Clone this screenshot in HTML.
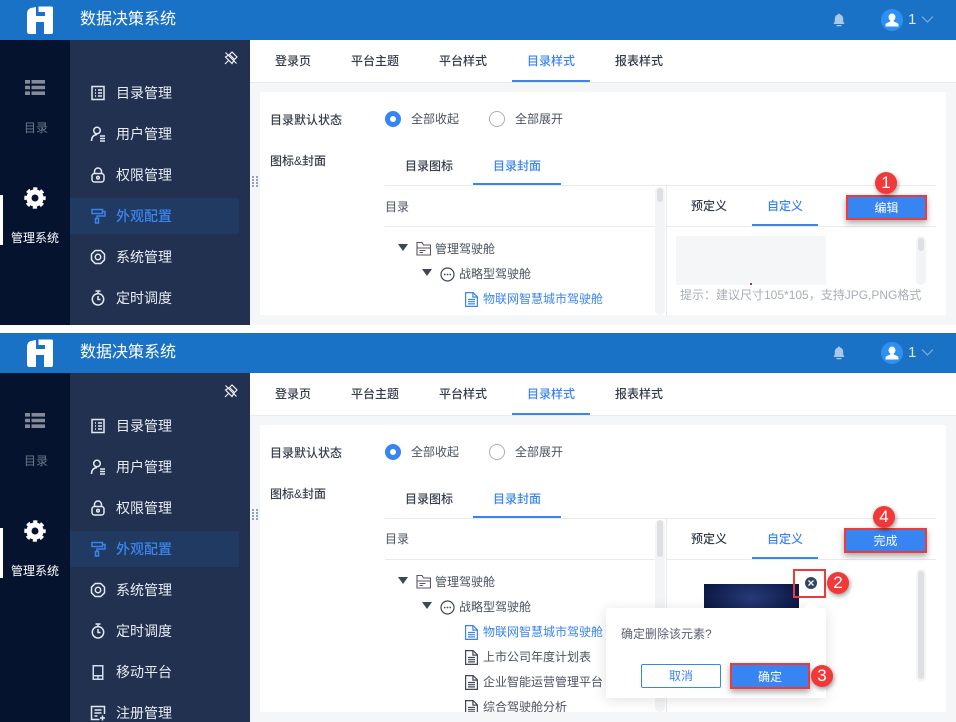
<!DOCTYPE html>
<html lang="zh-CN">
<head>
<meta charset="utf-8">
<title>数据决策系统</title>
<style>
html,body{margin:0;padding:0;background:#fff}
body{width:956px;height:722px;position:relative;overflow:hidden;font-family:"Liberation Sans","Noto Sans CJK SC",sans-serif;font-size:12px;color:#3b4354}
.p{position:absolute;left:0;width:956px;overflow:hidden;background:#f5f6f8}
.a{position:absolute;display:block}
.t{position:absolute;white-space:nowrap;line-height:20px;height:20px}
.hd{left:0;top:0;width:956px;height:40px;background:#1a72c6}
.rail{left:0;top:40px;width:70px;background:#06132e}
.menu{left:70px;top:40px;width:180px;background:#223150}
.m{color:#e8edf5;font-size:14px;left:116px}
.ic{position:absolute;fill:none;stroke:#e3e9f2;stroke-width:1.5}
.tab{font-weight:500;color:#353c4a}
.blue{color:#3a84ee}
.line{position:absolute;background:#e8eaed}
.ul{position:absolute;background:#3685f2}
.track{position:absolute;background:#f3f4f5;border-radius:5px}
.thumb{position:absolute;background:#dddfe3;border-radius:3px}
.btn{position:absolute;box-sizing:border-box;background:#3685f2;border:2px solid #f03a3a;color:#fff;text-align:center;line-height:23px;box-shadow:0 3px 6px rgba(0,0,0,.35)}
.bd{position:absolute;width:22px;height:22px;border-radius:50%;background:#f03a3a;color:#fff;font-size:17px;line-height:22px;text-align:center;box-shadow:1px 2px 5px rgba(0,0,0,.4)}
.tree{color:#4a5160}
</style>
</head>
<body>
<svg width="0" height="0" style="position:absolute">
<defs>
<symbol id="logo" viewBox="0 0 28 28"><path fill="#fff" d="M1 8Q1 3 5 2L10 1V28H3.500Q1 28 1 25ZM10 10H18V16H10ZM12.500 .5H25.500Q27 .5 27 2V26Q27 28 25 28H18V10H19V6H12.500Z"/></symbol>
<symbol id="list" viewBox="0 0 20 15"><path fill="#838a98" d="M0 0h5v3.600H0zM6.500 0H20v3.600H6.500zM0 5.700h5v3.600H0zM6.500 5.700H20v3.600H6.500zM0 11.400h5V15H0zM6.500 11.400H20V15H6.500z"/></symbol>
<symbol id="gear" viewBox="0 0 24 24"><circle cx="12" cy="12" r="6.600" fill="none" stroke="#fff" stroke-width="5.600"/><circle cx="12" cy="12" r="10" fill="none" stroke="#fff" stroke-width="3.400" stroke-dasharray="4.400 3.454" stroke-dashoffset="2.200"/></symbol>
<symbol id="i1" viewBox="0 0 16 16"><path d="M2 1.500h12v13H2zM5 5h1M8 5h4M5 8h1M8 8h4M5 11h1M8 11h4"/></symbol>
<symbol id="i2" viewBox="0 0 16 16"><circle cx="7" cy="4.500" r="3.300"/><path d="M1.500 15c0-4 2-6 5.500-6.500M10 10h5M10 12.500h5M10 15h5"/></symbol>
<symbol id="i3" viewBox="0 0 16 16"><path d="M4.500 6.500V4.500a3.500 3.500 0 0 1 7 0v2"/><rect x="2" y="6.500" width="12" height="8.500" rx="2.500"/><circle cx="8" cy="10.700" r="1.300"/></symbol>
<symbol id="i4" viewBox="0 0 16 16"><path stroke="#3a84ee" d="M2 1.500h10.500v4H2zM12.500 3.500H15v4.500H7v2M5.500 10.500h3v4.500h-3z"/></symbol>
<symbol id="i5" viewBox="0 0 16 16"><path d="M5.200 1.500h5.600l3.700 3.700v5.600l-3.700 3.700H5.200l-3.700-3.700V5.200z" stroke-linejoin="round"/><circle cx="8" cy="8" r="2.700"/></symbol>
<symbol id="i6" viewBox="0 0 16 16"><path d="M5.500 1h5M8 1v2.500M8 6v3.500h2.500"/><circle cx="8" cy="9.300" r="5.700"/></symbol>
<symbol id="i7" viewBox="0 0 16 16"><path stroke="none" fill="#cfe0f2" fill-rule="evenodd" d="M2.500 1h11v15h-11zM4 2.500V11h8V2.500zM4 12.500V14.500h3.300V12.500zM8.700 12.500V14.500H12V12.500z"/></symbol>
<symbol id="i8" viewBox="0 0 16 16"><path d="M14.500 9V1.500h-13v13h8M4.500 5h7M4.500 8h7M4.500 11h3M10 13h5M12.500 10.500v5"/></symbol>
<symbol id="pin" viewBox="0 0 14 14"><path fill="none" stroke="#eef1f6" stroke-width="1.200" d="M1.500 6l4-2.500 5 5L8 12.500zM5.500 3.500L8 1l5 5-2.500 2.500M1 13l3.500-3.500M12.500 12.500L1.500 1.500"/></symbol>
<symbol id="folder" viewBox="0 0 15 15"><path fill="none" stroke="#5b5468" stroke-width="1.100" d="M1 14V1.500h5l1.500 2.500H14.500V14zM1 7h13.500M3.500 9.500h6M3.500 11.500h3.500"/></symbol>
<symbol id="dots" viewBox="0 0 15 15"><circle cx="7.500" cy="7.500" r="6.500" fill="none" stroke="#3e4657" stroke-width="1.200"/><path fill="#3e4657" d="M4 6.800h1.500v1.500H4zM6.800 6.800h1.500v1.500H6.800zM9.500 6.800H11v1.500H9.500z"/></symbol>
<symbol id="file" viewBox="0 0 13 15"><path fill="none" stroke="currentColor" stroke-width="1.200" d="M.6.600h7.500l4.300 4.300v9.500H.600zM7.900.6v4.500h4.500M3 7.500h7M3 9.700h7M3 11.900h7"/></symbol>
<symbol id="bell" viewBox="0 0 12 14"><path fill="#a9c8ea" d="M6 .5c.6 0 1 .4 1 1 2.200.5 3.200 2.200 3.200 4.500v2.500l1.300 2.500H.5l1.300-2.500V6c0-2.300 1-4 3.200-4.500 0-.6.4-1 1-1zM3.500 12h5v1.200h-5z"/></symbol>
<symbol id="user" viewBox="0 0 12 13"><path fill="#fff" d="M6 .5a3.200 3.200 0 0 1 3.200 3.200c0 1.500-.7 2.800-1.700 3.300v.8l3.500 1.600c.6.300 1 .8 1 1.500v1.600H0v-1.600c0-.7.400-1.200 1-1.500l3.500-1.600V7C3.500 6.500 2.800 5.200 2.800 3.700A3.200 3.200 0 0 1 6 .5z"/></symbol>
<symbol id="grip" viewBox="0 0 6 12"><path fill="#8fa3c8" d="M0 0h2v2H0zM4 0h2v2H4zM0 3h2v2H0zM4 3h2v2H4zM0 6h2v2H0zM4 6h2v2H4zM0 9h2v2H0zM4 9h2v2H4z"/></symbol>
</defs>
</svg>

<!-- PANEL 1 -->
<div class="p" style="top:0;height:325px">
  <div class="a hd"></div>
  <svg class="a" style="left:26px;top:6px" width="28" height="28"><use href="#logo"/></svg>
  <div class="t" style="left:80px;top:10px;font-size:16px;color:#fff">数据决策系统</div>
  <svg class="a" style="left:833px;top:13px" width="12" height="14"><use href="#bell"/></svg>
  <div class="a" style="left:881px;top:9px;width:22px;height:22px;border-radius:50%;background:#2e90f0"></div>
  <svg class="a" style="left:885px;top:13px" width="14" height="14"><use href="#user"/></svg>
  <div class="t" style="left:908px;top:10px;font-size:15px;color:#dce9f8">1</div>
  <svg class="a" style="left:921px;top:15px" width="13" height="9"><path d="M1 1.500l5.500 5.500L12 1.500" fill="none" stroke="#87b0dc" stroke-width="1.100"/></svg>

  <div class="a rail" style="height:285px"></div>
  <div class="a menu" style="height:285px"></div>
  <svg class="a" style="left:25px;top:80px" width="20" height="15"><use href="#list"/></svg>
  <div class="t" style="left:24px;top:118px;color:#6d7889">目录</div>
  <svg class="a" style="left:24px;top:187px" width="22" height="22"><use href="#gear"/></svg>
  <div class="a" style="left:0;top:195px;width:3px;height:50px;background:#fff"></div>
  <div class="t" style="left:11px;top:228px;color:#fff">管理系统</div>
  <svg class="a" style="left:224px;top:51px" width="14" height="14"><use href="#pin"/></svg>
  <div class="a" style="left:70px;top:198px;width:169px;height:36px;background:#213a61"></div>

  <svg class="ic" style="left:90px;top:85px" width="16" height="16"><use href="#i1"/></svg><div class="t m" style="top:83px">目录管理</div>
  <svg class="ic" style="left:90px;top:126px" width="16" height="16"><use href="#i2"/></svg><div class="t m" style="top:124px">用户管理</div>
  <svg class="ic" style="left:90px;top:167px" width="16" height="16"><use href="#i3"/></svg><div class="t m" style="top:165px">权限管理</div>
  <svg class="ic" style="left:90px;top:208px;stroke:#3a84ee" width="16" height="16"><use href="#i4"/></svg><div class="t m" style="top:206px;color:#3a84ee;font-weight:500">外观配置</div>
  <svg class="ic" style="left:90px;top:249px" width="16" height="16"><use href="#i5"/></svg><div class="t m" style="top:247px">系统管理</div>
  <svg class="ic" style="left:90px;top:290px" width="16" height="16"><use href="#i6"/></svg><div class="t m" style="top:288px">定时调度</div>

  <div class="a" style="left:250px;top:40px;width:706px;height:42px;background:#fff"></div>
  <div class="line" style="left:250px;top:82px;width:706px;height:1px"></div>
  <svg class="a" style="left:252px;top:176px" width="6" height="12"><use href="#grip"/></svg>
  <div class="t tab" style="left:275px;top:51px">登录页</div>
  <div class="t tab" style="left:351px;top:51px">平台主题</div>
  <div class="t tab" style="left:439px;top:51px">平台样式</div>
  <div class="t tab blue" style="left:527px;top:51px">目录样式</div>
  <div class="t tab" style="left:615px;top:51px">报表样式</div>
  <div class="ul" style="left:512px;top:80px;width:78px;height:2px"></div>

  <div class="a" style="left:260px;top:92px;width:686px;height:223px;background:#fff"></div>
  <div class="t tab" style="left:270px;top:110px">目录默认状态</div>
  <div class="a" style="left:385px;top:111px;width:16px;height:16px;border-radius:50%;background:#3685f2"></div>
  <div class="a" style="left:390px;top:116px;width:6px;height:6px;border-radius:50%;background:#fff"></div>
  <div class="t tree" style="left:411px;top:109px">全部收起</div>
  <div class="a" style="left:489px;top:111px;width:14px;height:14px;border-radius:50%;border:1px solid #a9aeb8"></div>
  <div class="t tree" style="left:515px;top:109px">全部展开</div>
  <div class="t tab" style="left:270px;top:151px">图标&amp;封面</div>
  <div class="t tab" style="left:405px;top:156px">目录图标</div>
  <div class="t tab blue" style="left:493px;top:156px">目录封面</div>
  <div class="line" style="left:385px;top:185px;width:551px;height:1px"></div>
  <div class="ul" style="left:473px;top:183px;width:88px;height:2px"></div>
  <div class="t tree" style="left:385px;top:197px">目录</div>
  <div class="line" style="left:385px;top:226px;width:270px;height:1px"></div>
  <div class="track" style="left:655px;top:187px;width:10px;height:128px"></div>
  <div class="thumb" style="left:657px;top:188px;width:6px;height:14px"></div>
  <div class="line" style="left:666px;top:186px;width:1px;height:129px"></div>
  <svg class="a" style="left:398px;top:244px" width="10" height="8"><path d="M0 0h10L5 7z" fill="#3e4657"/></svg>
  <svg class="a" style="left:416px;top:241px" width="15" height="15"><use href="#folder"/></svg>
  <div class="t tree" style="left:435px;top:239px">管理驾驶舱</div>
  <svg class="a" style="left:422px;top:269px" width="10" height="8"><path d="M0 0h10L5 7z" fill="#3e4657"/></svg>
  <svg class="a" style="left:440px;top:267px" width="15" height="15"><use href="#dots"/></svg>
  <div class="t tree" style="left:459px;top:264px">战略型驾驶舱</div>
  <svg class="a" style="left:465px;top:292px;color:#3a84ee" width="13" height="15"><use href="#file"/></svg>
  <div class="t blue" style="left:483px;top:289px">物联网智慧城市驾驶舱</div>

  <div class="t tab" style="left:691px;top:196px">预定义</div>
  <div class="t tab blue" style="left:767px;top:196px">自定义</div>
  <div class="line" style="left:667px;top:226px;width:269px;height:1px"></div>
  <div class="ul" style="left:752px;top:224px;width:66px;height:2px"></div>
  <div class="btn" style="left:846px;top:195px;width:81px;height:25px">编辑</div>
  <div class="bd" style="left:875px;top:172px">1</div>
  <div class="a" style="left:676px;top:236px;width:150px;height:49px;background:#f5f6f8"></div>
  <div class="a" style="left:750px;top:283px;width:2px;height:2px;background:#7a4a4a"></div>
  <div class="track" style="left:916px;top:236px;width:10px;height:49px"></div>
  <div class="thumb" style="left:918px;top:238px;width:6px;height:13px"></div>
  <div class="t" style="left:680px;top:285px;color:#a8adb8">提示：建议尺寸105*105，支持JPG,PNG格式</div>
</div>

<!-- PANEL 2 -->
<div class="p" style="top:333px;height:389px">
  <div class="a hd"></div>
  <svg class="a" style="left:26px;top:6px" width="28" height="28"><use href="#logo"/></svg>
  <div class="t" style="left:80px;top:10px;font-size:16px;color:#fff">数据决策系统</div>
  <svg class="a" style="left:833px;top:13px" width="12" height="14"><use href="#bell"/></svg>
  <div class="a" style="left:881px;top:9px;width:22px;height:22px;border-radius:50%;background:#2e90f0"></div>
  <svg class="a" style="left:885px;top:13px" width="14" height="14"><use href="#user"/></svg>
  <div class="t" style="left:908px;top:10px;font-size:15px;color:#dce9f8">1</div>
  <svg class="a" style="left:921px;top:15px" width="13" height="9"><path d="M1 1.500l5.500 5.500L12 1.500" fill="none" stroke="#87b0dc" stroke-width="1.100"/></svg>

  <div class="a rail" style="height:349px"></div>
  <div class="a menu" style="height:349px"></div>
  <svg class="a" style="left:25px;top:80px" width="20" height="15"><use href="#list"/></svg>
  <div class="t" style="left:24px;top:118px;color:#6d7889">目录</div>
  <svg class="a" style="left:24px;top:187px" width="22" height="22"><use href="#gear"/></svg>
  <div class="a" style="left:0;top:195px;width:3px;height:50px;background:#fff"></div>
  <div class="t" style="left:11px;top:228px;color:#fff">管理系统</div>
  <svg class="a" style="left:224px;top:51px" width="14" height="14"><use href="#pin"/></svg>
  <div class="a" style="left:70px;top:198px;width:169px;height:36px;background:#213a61"></div>

  <svg class="ic" style="left:90px;top:85px" width="16" height="16"><use href="#i1"/></svg><div class="t m" style="top:83px">目录管理</div>
  <svg class="ic" style="left:90px;top:126px" width="16" height="16"><use href="#i2"/></svg><div class="t m" style="top:124px">用户管理</div>
  <svg class="ic" style="left:90px;top:167px" width="16" height="16"><use href="#i3"/></svg><div class="t m" style="top:165px">权限管理</div>
  <svg class="ic" style="left:90px;top:208px;stroke:#3a84ee" width="16" height="16"><use href="#i4"/></svg><div class="t m" style="top:206px;color:#3a84ee;font-weight:500">外观配置</div>
  <svg class="ic" style="left:90px;top:249px" width="16" height="16"><use href="#i5"/></svg><div class="t m" style="top:247px">系统管理</div>
  <svg class="ic" style="left:90px;top:290px" width="16" height="16"><use href="#i6"/></svg><div class="t m" style="top:288px">定时调度</div>
  <svg class="a" style="left:90px;top:331px" width="16" height="16"><use href="#i7"/></svg><div class="t m" style="top:329px">移动平台</div>
  <svg class="ic" style="left:90px;top:372px" width="16" height="16"><use href="#i8"/></svg><div class="t m" style="top:370px;height:19px">注册管理</div>

  <div class="a" style="left:250px;top:40px;width:706px;height:42px;background:#fff"></div>
  <div class="line" style="left:250px;top:82px;width:706px;height:1px"></div>
  <svg class="a" style="left:252px;top:176px" width="6" height="12"><use href="#grip"/></svg>
  <div class="t tab" style="left:275px;top:51px">登录页</div>
  <div class="t tab" style="left:351px;top:51px">平台主题</div>
  <div class="t tab" style="left:439px;top:51px">平台样式</div>
  <div class="t tab blue" style="left:527px;top:51px">目录样式</div>
  <div class="t tab" style="left:615px;top:51px">报表样式</div>
  <div class="ul" style="left:512px;top:80px;width:78px;height:2px"></div>

  <div class="a" style="left:260px;top:92px;width:686px;height:287px;background:#fff"></div>
  <div class="t tab" style="left:270px;top:110px">目录默认状态</div>
  <div class="a" style="left:385px;top:111px;width:16px;height:16px;border-radius:50%;background:#3685f2"></div>
  <div class="a" style="left:390px;top:116px;width:6px;height:6px;border-radius:50%;background:#fff"></div>
  <div class="t tree" style="left:411px;top:109px">全部收起</div>
  <div class="a" style="left:489px;top:111px;width:14px;height:14px;border-radius:50%;border:1px solid #a9aeb8"></div>
  <div class="t tree" style="left:515px;top:109px">全部展开</div>
  <div class="t tab" style="left:270px;top:151px">图标&amp;封面</div>
  <div class="t tab" style="left:405px;top:156px">目录图标</div>
  <div class="t tab blue" style="left:493px;top:156px">目录封面</div>
  <div class="line" style="left:385px;top:185px;width:551px;height:1px"></div>
  <div class="ul" style="left:473px;top:183px;width:88px;height:2px"></div>
  <div class="t tree" style="left:385px;top:196px">目录</div>
  <div class="line" style="left:385px;top:226px;width:270px;height:1px"></div>
  <div class="track" style="left:655px;top:187px;width:10px;height:192px"></div>
  <div class="thumb" style="left:657px;top:187px;width:6px;height:37px"></div>
  <div class="line" style="left:666px;top:186px;width:1px;height:193px"></div>
  <svg class="a" style="left:398px;top:244px" width="10" height="8"><path d="M0 0h10L5 7z" fill="#3e4657"/></svg>
  <svg class="a" style="left:416px;top:241px" width="15" height="15"><use href="#folder"/></svg>
  <div class="t tree" style="left:435px;top:239px">管理驾驶舱</div>
  <svg class="a" style="left:422px;top:269px" width="10" height="8"><path d="M0 0h10L5 7z" fill="#3e4657"/></svg>
  <svg class="a" style="left:440px;top:267px" width="15" height="15"><use href="#dots"/></svg>
  <div class="t tree" style="left:459px;top:264px">战略型驾驶舱</div>
  <svg class="a" style="left:465px;top:292px;color:#3a84ee" width="13" height="15"><use href="#file"/></svg>
  <div class="t blue" style="left:483px;top:289px">物联网智慧城市驾驶舱</div>
  <svg class="a" style="left:465px;top:317px;color:#3e4657" width="13" height="15"><use href="#file"/></svg>
  <div class="t tree" style="left:483px;top:314px">上市公司年度计划表</div>
  <svg class="a" style="left:465px;top:342px;color:#3e4657" width="13" height="15"><use href="#file"/></svg>
  <div class="t tree" style="left:483px;top:339px">企业智能运营管理平台</div>
  <svg class="a" style="left:465px;top:367px;color:#3e4657" width="13" height="12"><use href="#file" height="15"/></svg>
  <div class="a" style="left:483px;top:364px;width:120px;height:15px;overflow:hidden"><div class="t tree" style="left:0;top:0">综合驾驶舱分析</div></div>

  <div class="t tab" style="left:691px;top:196px">预定义</div>
  <div class="t tab blue" style="left:767px;top:196px">自定义</div>
  <div class="line" style="left:667px;top:226px;width:269px;height:1px"></div>
  <div class="ul" style="left:752px;top:224px;width:66px;height:2px"></div>
  <div class="btn" style="left:844px;top:195px;width:83px;height:25px">完成</div>
  <div class="bd" style="left:873px;top:173px">4</div>
  <div class="track" style="left:916px;top:236px;width:10px;height:113px"></div>
  <div class="thumb" style="left:918px;top:238px;width:6px;height:108px"></div>
  <div class="a" style="left:704px;top:251px;width:95px;height:40px;background:radial-gradient(ellipse at 50% 35%,#263b78 0%,#101d4c 62%,#050c2e 100%)"></div>
  <div class="a" style="left:793px;top:236px;width:33px;height:29px;box-sizing:border-box;border:2px solid #f03a3a"></div>
  <svg class="a" style="left:805px;top:244px" width="12" height="12"><circle cx="6" cy="6" r="6" fill="#2f4468"/><path d="M3.500 3.500l5 5M8.500 3.500l-5 5" stroke="#fff" stroke-width="1.300"/></svg>
  <div class="bd" style="left:827px;top:239px">2</div>

  <div class="a" style="left:606px;top:275px;width:220px;height:90px;background:#fff;border-radius:2px;box-shadow:0 2px 14px rgba(0,0,0,.12)"></div>
  <div class="a" style="left:806px;top:270px;width:10px;height:10px;background:#fff;transform:rotate(45deg)"></div>
  <div class="t" style="left:621px;top:291px;color:#5a6170">确定删除该元素?</div>
  <div class="a" style="left:641px;top:331px;width:78px;height:22px;border:1px solid #3685f2;border-radius:2px;color:#3a84ee;text-align:center;line-height:23px">取消</div>
  <div class="btn" style="left:730px;top:330px;width:80px;height:26px;line-height:24px">确定</div>
  <div class="bd" style="left:811px;top:332px">3</div>
</div>
</body>
</html>
